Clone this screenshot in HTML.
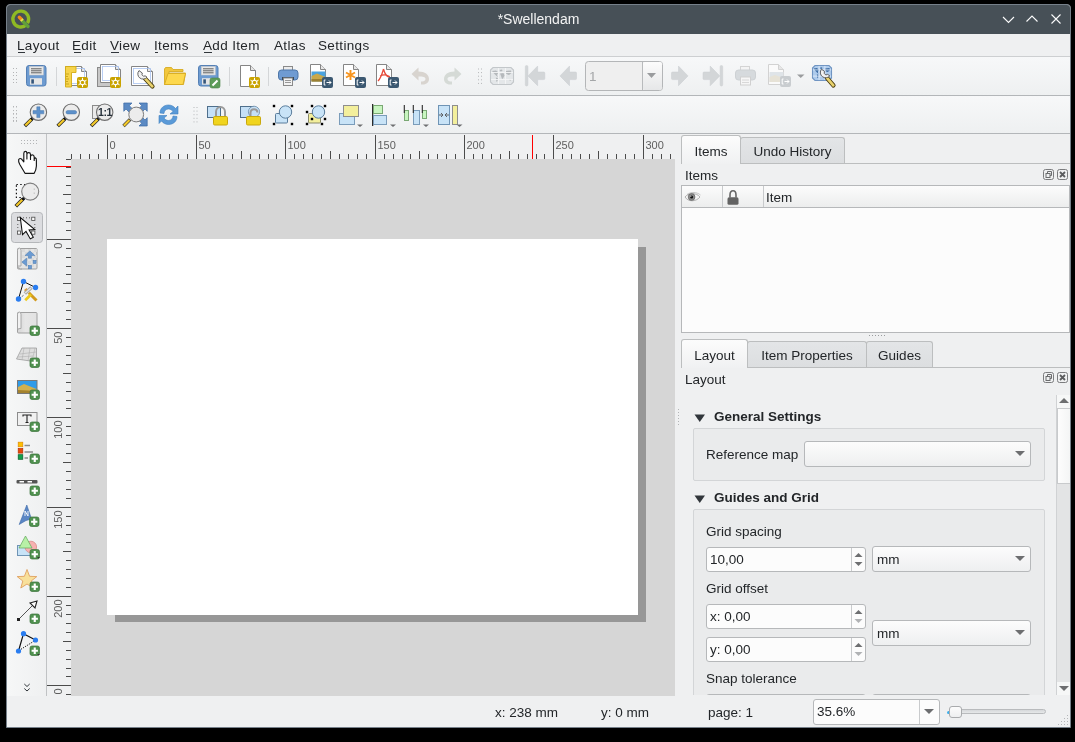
<!DOCTYPE html>
<html><head><meta charset="utf-8"><style>
*{margin:0;padding:0;box-sizing:border-box}
html,body{width:1075px;height:742px;overflow:hidden;background:#000}
body{position:relative;-webkit-font-smoothing:antialiased;font-family:"Liberation Sans",sans-serif;font-size:13.5px;color:#232629}
.a{position:absolute}
.t{position:absolute;white-space:nowrap;line-height:16px}
.ul{position:absolute;height:1px;background:#31363b}
.tb{position:absolute;left:7px;width:1063px;background:linear-gradient(#f7f8f9,#eef0f1);border-bottom:1px solid #b3b6b9}
.dot{position:absolute;width:1px;height:1px;background:#b0b2b4}
svg{position:absolute;overflow:visible}
.tab{position:absolute;border:1px solid #bcbebf;border-bottom:none;border-radius:3px 3px 0 0;text-align:center;line-height:24px;padding-top:2px}
.tab.act{background:linear-gradient(#fcfcfc,#f0f1f2)}
.tab.ina{background:linear-gradient(#e3e5e7,#dcdee0)}
.field{position:absolute;background:#fcfcfc;border:1px solid #b6b8ba;border-radius:3px}
.combo{position:absolute;background:linear-gradient(#fcfcfc,#eeeff0);border:1px solid #b6b8ba;border-radius:3px}
</style></head><body><div style="position:absolute;left:0;top:0;width:1075px;height:742px;will-change:transform">
<div class="a" style="left:6px;top:4px;width:1065px;height:724px;background:#eff0f1;border:1px solid #76808a;border-radius:4px 4px 0 0"></div>
<div class="a" style="left:7px;top:5px;width:1063px;height:29px;background:#475057;border-radius:3px 3px 0 0"></div>
<div class="t" style="left:7px;top:11px;width:1063px;text-align:center;color:#f4f4f4;font-size:14px">*Swellendam</div>
<div class="a" style="left:7px;top:34px;width:1063px;height:23px;background:#eff0f1;border-bottom:1px solid #cdcfd1"></div>
<span class="t" style="left:17px;top:38px;letter-spacing:0.35px">Layout</span>
<span class="t" style="left:72px;top:38px;letter-spacing:0.35px">Edit</span>
<span class="t" style="left:110px;top:38px;letter-spacing:0.35px">View</span>
<span class="t" style="left:154px;top:38px;letter-spacing:0.35px">Items</span>
<span class="t" style="left:203px;top:38px;letter-spacing:0.35px">Add Item</span>
<span class="t" style="left:274px;top:38px;letter-spacing:0.35px">Atlas</span>
<span class="t" style="left:318px;top:38px;letter-spacing:0.35px">Settings</span>
<div class="ul" style="left:18px;top:52px;width:7px"></div>
<div class="ul" style="left:74px;top:52px;width:7px"></div>
<div class="ul" style="left:111px;top:52px;width:8px"></div>
<div class="ul" style="left:155px;top:52px;width:3px"></div>
<div class="ul" style="left:204px;top:52px;width:8px"></div>
<div class="tb" style="top:57px;height:39px"></div>
<div class="tb" style="top:96px;height:38px"></div>
<div class="dot" style="left:13px;top:68.0px;background:#b3b5b7"></div><div class="dot" style="left:13px;top:71.6px;background:#b3b5b7"></div><div class="dot" style="left:13px;top:75.2px;background:#b3b5b7"></div><div class="dot" style="left:13px;top:78.8px;background:#b3b5b7"></div><div class="dot" style="left:13px;top:82.4px;background:#b3b5b7"></div><div class="dot" style="left:16px;top:68.0px;background:#b3b5b7"></div><div class="dot" style="left:16px;top:71.6px;background:#b3b5b7"></div><div class="dot" style="left:16px;top:75.2px;background:#b3b5b7"></div><div class="dot" style="left:16px;top:78.8px;background:#b3b5b7"></div><div class="dot" style="left:16px;top:82.4px;background:#b3b5b7"></div>
<div class="dot" style="left:13px;top:106.0px;background:#b3b5b7"></div><div class="dot" style="left:13px;top:109.6px;background:#b3b5b7"></div><div class="dot" style="left:13px;top:113.2px;background:#b3b5b7"></div><div class="dot" style="left:13px;top:116.8px;background:#b3b5b7"></div><div class="dot" style="left:13px;top:120.4px;background:#b3b5b7"></div><div class="dot" style="left:16px;top:106.0px;background:#b3b5b7"></div><div class="dot" style="left:16px;top:109.6px;background:#b3b5b7"></div><div class="dot" style="left:16px;top:113.2px;background:#b3b5b7"></div><div class="dot" style="left:16px;top:116.8px;background:#b3b5b7"></div><div class="dot" style="left:16px;top:120.4px;background:#b3b5b7"></div>
<div class="a" style="left:7px;top:134px;width:39px;height:562px;background:linear-gradient(90deg,#f6f7f7,#eff0f1)"></div>
<div class="dot" style="left:21px;top:140px;background:#b3b5b7"></div><div class="dot" style="left:21px;top:143px;background:#b3b5b7"></div><div class="dot" style="left:24px;top:140px;background:#b3b5b7"></div><div class="dot" style="left:24px;top:143px;background:#b3b5b7"></div><div class="dot" style="left:27px;top:140px;background:#b3b5b7"></div><div class="dot" style="left:27px;top:143px;background:#b3b5b7"></div><div class="dot" style="left:30px;top:140px;background:#b3b5b7"></div><div class="dot" style="left:30px;top:143px;background:#b3b5b7"></div><div class="dot" style="left:33px;top:140px;background:#b3b5b7"></div><div class="dot" style="left:33px;top:143px;background:#b3b5b7"></div><div class="dot" style="left:36px;top:140px;background:#b3b5b7"></div><div class="dot" style="left:36px;top:143px;background:#b3b5b7"></div>
<div class="a" style="left:46px;top:134px;width:1px;height:562px;background:#c0c2c4"></div>
<div class="a" style="left:47px;top:134px;width:628px;height:25px;background:#eff0f1"></div>
<div class="a" style="left:47px;top:159px;width:24px;height:537px;background:#eff0f1"></div>
<div class="a" style="left:71px;top:159px;width:604px;height:537px;background:#d6d6d6;overflow:hidden"><div class="a" style="left:44px;top:88px;width:531px;height:375px;background:#979797"></div><div class="a" style="left:36px;top:80px;width:531px;height:376px;background:#fff"></div></div>
<svg width="1075" height="742" style="left:0;top:0"><defs><clipPath id="rc"><rect x="47" y="134" width="628" height="561"/></clipPath></defs><g clip-path="url(#rc)"><line x1="71.5" y1="154" x2="71.5" y2="159" stroke="#4b4b4b"/><line x1="80.5" y1="154" x2="80.5" y2="159" stroke="#4b4b4b"/><line x1="89.5" y1="154" x2="89.5" y2="159" stroke="#4b4b4b"/><line x1="98.5" y1="154" x2="98.5" y2="159" stroke="#4b4b4b"/><line x1="107.5" y1="135" x2="107.5" y2="159" stroke="#4b4b4b"/><text x="109.5" y="149" font-size="11" fill="#5e5e5e" font-family="Liberation Sans">0</text><line x1="116.5" y1="154" x2="116.5" y2="159" stroke="#4b4b4b"/><line x1="125.5" y1="154" x2="125.5" y2="159" stroke="#4b4b4b"/><line x1="134.5" y1="154" x2="134.5" y2="159" stroke="#4b4b4b"/><line x1="142.5" y1="154" x2="142.5" y2="159" stroke="#4b4b4b"/><line x1="151.5" y1="151" x2="151.5" y2="159" stroke="#4b4b4b"/><line x1="160.5" y1="154" x2="160.5" y2="159" stroke="#4b4b4b"/><line x1="169.5" y1="154" x2="169.5" y2="159" stroke="#4b4b4b"/><line x1="178.5" y1="154" x2="178.5" y2="159" stroke="#4b4b4b"/><line x1="187.5" y1="154" x2="187.5" y2="159" stroke="#4b4b4b"/><line x1="196.5" y1="135" x2="196.5" y2="159" stroke="#4b4b4b"/><text x="198.5" y="149" font-size="11" fill="#5e5e5e" font-family="Liberation Sans">50</text><line x1="205.5" y1="154" x2="205.5" y2="159" stroke="#4b4b4b"/><line x1="214.5" y1="154" x2="214.5" y2="159" stroke="#4b4b4b"/><line x1="223.5" y1="154" x2="223.5" y2="159" stroke="#4b4b4b"/><line x1="232.5" y1="154" x2="232.5" y2="159" stroke="#4b4b4b"/><line x1="241.5" y1="151" x2="241.5" y2="159" stroke="#4b4b4b"/><line x1="250.5" y1="154" x2="250.5" y2="159" stroke="#4b4b4b"/><line x1="259.5" y1="154" x2="259.5" y2="159" stroke="#4b4b4b"/><line x1="268.5" y1="154" x2="268.5" y2="159" stroke="#4b4b4b"/><line x1="276.5" y1="154" x2="276.5" y2="159" stroke="#4b4b4b"/><line x1="285.5" y1="135" x2="285.5" y2="159" stroke="#4b4b4b"/><text x="287.5" y="149" font-size="11" fill="#5e5e5e" font-family="Liberation Sans">100</text><line x1="294.5" y1="154" x2="294.5" y2="159" stroke="#4b4b4b"/><line x1="303.5" y1="154" x2="303.5" y2="159" stroke="#4b4b4b"/><line x1="312.5" y1="154" x2="312.5" y2="159" stroke="#4b4b4b"/><line x1="321.5" y1="154" x2="321.5" y2="159" stroke="#4b4b4b"/><line x1="330.5" y1="151" x2="330.5" y2="159" stroke="#4b4b4b"/><line x1="339.5" y1="154" x2="339.5" y2="159" stroke="#4b4b4b"/><line x1="348.5" y1="154" x2="348.5" y2="159" stroke="#4b4b4b"/><line x1="357.5" y1="154" x2="357.5" y2="159" stroke="#4b4b4b"/><line x1="366.5" y1="154" x2="366.5" y2="159" stroke="#4b4b4b"/><line x1="375.5" y1="135" x2="375.5" y2="159" stroke="#4b4b4b"/><text x="377.5" y="149" font-size="11" fill="#5e5e5e" font-family="Liberation Sans">150</text><line x1="384.5" y1="154" x2="384.5" y2="159" stroke="#4b4b4b"/><line x1="393.5" y1="154" x2="393.5" y2="159" stroke="#4b4b4b"/><line x1="402.5" y1="154" x2="402.5" y2="159" stroke="#4b4b4b"/><line x1="410.5" y1="154" x2="410.5" y2="159" stroke="#4b4b4b"/><line x1="419.5" y1="151" x2="419.5" y2="159" stroke="#4b4b4b"/><line x1="428.5" y1="154" x2="428.5" y2="159" stroke="#4b4b4b"/><line x1="437.5" y1="154" x2="437.5" y2="159" stroke="#4b4b4b"/><line x1="446.5" y1="154" x2="446.5" y2="159" stroke="#4b4b4b"/><line x1="455.5" y1="154" x2="455.5" y2="159" stroke="#4b4b4b"/><line x1="464.5" y1="135" x2="464.5" y2="159" stroke="#4b4b4b"/><text x="466.5" y="149" font-size="11" fill="#5e5e5e" font-family="Liberation Sans">200</text><line x1="473.5" y1="154" x2="473.5" y2="159" stroke="#4b4b4b"/><line x1="482.5" y1="154" x2="482.5" y2="159" stroke="#4b4b4b"/><line x1="491.5" y1="154" x2="491.5" y2="159" stroke="#4b4b4b"/><line x1="500.5" y1="154" x2="500.5" y2="159" stroke="#4b4b4b"/><line x1="509.5" y1="151" x2="509.5" y2="159" stroke="#4b4b4b"/><line x1="518.5" y1="154" x2="518.5" y2="159" stroke="#4b4b4b"/><line x1="527.5" y1="154" x2="527.5" y2="159" stroke="#4b4b4b"/><line x1="536.5" y1="154" x2="536.5" y2="159" stroke="#4b4b4b"/><line x1="544.5" y1="154" x2="544.5" y2="159" stroke="#4b4b4b"/><line x1="553.5" y1="135" x2="553.5" y2="159" stroke="#4b4b4b"/><text x="555.5" y="149" font-size="11" fill="#5e5e5e" font-family="Liberation Sans">250</text><line x1="562.5" y1="154" x2="562.5" y2="159" stroke="#4b4b4b"/><line x1="571.5" y1="154" x2="571.5" y2="159" stroke="#4b4b4b"/><line x1="580.5" y1="154" x2="580.5" y2="159" stroke="#4b4b4b"/><line x1="589.5" y1="154" x2="589.5" y2="159" stroke="#4b4b4b"/><line x1="598.5" y1="151" x2="598.5" y2="159" stroke="#4b4b4b"/><line x1="607.5" y1="154" x2="607.5" y2="159" stroke="#4b4b4b"/><line x1="616.5" y1="154" x2="616.5" y2="159" stroke="#4b4b4b"/><line x1="625.5" y1="154" x2="625.5" y2="159" stroke="#4b4b4b"/><line x1="634.5" y1="154" x2="634.5" y2="159" stroke="#4b4b4b"/><line x1="643.5" y1="135" x2="643.5" y2="159" stroke="#4b4b4b"/><text x="645.5" y="149" font-size="11" fill="#5e5e5e" font-family="Liberation Sans">300</text><line x1="652.5" y1="154" x2="652.5" y2="159" stroke="#4b4b4b"/><line x1="661.5" y1="154" x2="661.5" y2="159" stroke="#4b4b4b"/><line x1="670.5" y1="154" x2="670.5" y2="159" stroke="#4b4b4b"/><line x1="66" y1="159.5" x2="71" y2="159.5" stroke="#4b4b4b"/><line x1="66" y1="167.5" x2="71" y2="167.5" stroke="#4b4b4b"/><line x1="66" y1="176.5" x2="71" y2="176.5" stroke="#4b4b4b"/><line x1="66" y1="185.5" x2="71" y2="185.5" stroke="#4b4b4b"/><line x1="63" y1="194.5" x2="71" y2="194.5" stroke="#4b4b4b"/><line x1="66" y1="203.5" x2="71" y2="203.5" stroke="#4b4b4b"/><line x1="66" y1="212.5" x2="71" y2="212.5" stroke="#4b4b4b"/><line x1="66" y1="221.5" x2="71" y2="221.5" stroke="#4b4b4b"/><line x1="66" y1="230.5" x2="71" y2="230.5" stroke="#4b4b4b"/><line x1="47" y1="239.5" x2="71" y2="239.5" stroke="#4b4b4b"/><text transform="translate(61.5,242.5) rotate(-90)" text-anchor="end" font-size="11" fill="#5e5e5e" font-family="Liberation Sans">0</text><line x1="66" y1="248.5" x2="71" y2="248.5" stroke="#4b4b4b"/><line x1="66" y1="257.5" x2="71" y2="257.5" stroke="#4b4b4b"/><line x1="66" y1="266.5" x2="71" y2="266.5" stroke="#4b4b4b"/><line x1="66" y1="274.5" x2="71" y2="274.5" stroke="#4b4b4b"/><line x1="63" y1="283.5" x2="71" y2="283.5" stroke="#4b4b4b"/><line x1="66" y1="292.5" x2="71" y2="292.5" stroke="#4b4b4b"/><line x1="66" y1="301.5" x2="71" y2="301.5" stroke="#4b4b4b"/><line x1="66" y1="310.5" x2="71" y2="310.5" stroke="#4b4b4b"/><line x1="66" y1="319.5" x2="71" y2="319.5" stroke="#4b4b4b"/><line x1="47" y1="328.5" x2="71" y2="328.5" stroke="#4b4b4b"/><text transform="translate(61.5,331.5) rotate(-90)" text-anchor="end" font-size="11" fill="#5e5e5e" font-family="Liberation Sans">50</text><line x1="66" y1="337.5" x2="71" y2="337.5" stroke="#4b4b4b"/><line x1="66" y1="346.5" x2="71" y2="346.5" stroke="#4b4b4b"/><line x1="66" y1="355.5" x2="71" y2="355.5" stroke="#4b4b4b"/><line x1="66" y1="364.5" x2="71" y2="364.5" stroke="#4b4b4b"/><line x1="63" y1="373.5" x2="71" y2="373.5" stroke="#4b4b4b"/><line x1="66" y1="382.5" x2="71" y2="382.5" stroke="#4b4b4b"/><line x1="66" y1="391.5" x2="71" y2="391.5" stroke="#4b4b4b"/><line x1="66" y1="400.5" x2="71" y2="400.5" stroke="#4b4b4b"/><line x1="66" y1="408.5" x2="71" y2="408.5" stroke="#4b4b4b"/><line x1="47" y1="417.5" x2="71" y2="417.5" stroke="#4b4b4b"/><text transform="translate(61.5,420.5) rotate(-90)" text-anchor="end" font-size="11" fill="#5e5e5e" font-family="Liberation Sans">100</text><line x1="66" y1="426.5" x2="71" y2="426.5" stroke="#4b4b4b"/><line x1="66" y1="435.5" x2="71" y2="435.5" stroke="#4b4b4b"/><line x1="66" y1="444.5" x2="71" y2="444.5" stroke="#4b4b4b"/><line x1="66" y1="453.5" x2="71" y2="453.5" stroke="#4b4b4b"/><line x1="63" y1="462.5" x2="71" y2="462.5" stroke="#4b4b4b"/><line x1="66" y1="471.5" x2="71" y2="471.5" stroke="#4b4b4b"/><line x1="66" y1="480.5" x2="71" y2="480.5" stroke="#4b4b4b"/><line x1="66" y1="489.5" x2="71" y2="489.5" stroke="#4b4b4b"/><line x1="66" y1="498.5" x2="71" y2="498.5" stroke="#4b4b4b"/><line x1="47" y1="507.5" x2="71" y2="507.5" stroke="#4b4b4b"/><text transform="translate(61.5,510.5) rotate(-90)" text-anchor="end" font-size="11" fill="#5e5e5e" font-family="Liberation Sans">150</text><line x1="66" y1="516.5" x2="71" y2="516.5" stroke="#4b4b4b"/><line x1="66" y1="525.5" x2="71" y2="525.5" stroke="#4b4b4b"/><line x1="66" y1="534.5" x2="71" y2="534.5" stroke="#4b4b4b"/><line x1="66" y1="542.5" x2="71" y2="542.5" stroke="#4b4b4b"/><line x1="63" y1="551.5" x2="71" y2="551.5" stroke="#4b4b4b"/><line x1="66" y1="560.5" x2="71" y2="560.5" stroke="#4b4b4b"/><line x1="66" y1="569.5" x2="71" y2="569.5" stroke="#4b4b4b"/><line x1="66" y1="578.5" x2="71" y2="578.5" stroke="#4b4b4b"/><line x1="66" y1="587.5" x2="71" y2="587.5" stroke="#4b4b4b"/><line x1="47" y1="596.5" x2="71" y2="596.5" stroke="#4b4b4b"/><text transform="translate(61.5,599.5) rotate(-90)" text-anchor="end" font-size="11" fill="#5e5e5e" font-family="Liberation Sans">200</text><line x1="66" y1="605.5" x2="71" y2="605.5" stroke="#4b4b4b"/><line x1="66" y1="614.5" x2="71" y2="614.5" stroke="#4b4b4b"/><line x1="66" y1="623.5" x2="71" y2="623.5" stroke="#4b4b4b"/><line x1="66" y1="632.5" x2="71" y2="632.5" stroke="#4b4b4b"/><line x1="63" y1="641.5" x2="71" y2="641.5" stroke="#4b4b4b"/><line x1="66" y1="650.5" x2="71" y2="650.5" stroke="#4b4b4b"/><line x1="66" y1="659.5" x2="71" y2="659.5" stroke="#4b4b4b"/><line x1="66" y1="668.5" x2="71" y2="668.5" stroke="#4b4b4b"/><line x1="66" y1="676.5" x2="71" y2="676.5" stroke="#4b4b4b"/><line x1="47" y1="685.5" x2="71" y2="685.5" stroke="#4b4b4b"/><text transform="translate(61.5,688.5) rotate(-90)" text-anchor="end" font-size="11" fill="#5e5e5e" font-family="Liberation Sans">250</text><line x1="66" y1="694.5" x2="71" y2="694.5" stroke="#4b4b4b"/><line x1="532.5" y1="135" x2="532.5" y2="159" stroke="#ff0000"/><line x1="47" y1="166.5" x2="71" y2="166.5" stroke="#ff0000"/></g></svg>
<div class="a" style="left:675px;top:134px;width:395px;height:562px;background:#eff0f1"></div>
<div class="dot" style="left:678px;top:409px;background:#b3b5b7"></div><div class="dot" style="left:678px;top:412px;background:#b3b5b7"></div><div class="dot" style="left:678px;top:415px;background:#b3b5b7"></div><div class="dot" style="left:678px;top:418px;background:#b3b5b7"></div><div class="dot" style="left:678px;top:421px;background:#b3b5b7"></div><div class="dot" style="left:678px;top:424px;background:#b3b5b7"></div>
<div class="a" style="left:681px;top:163px;width:389px;height:1px;background:#bcbebf"></div>
<div class="tab ina" style="left:740px;top:137px;width:105px;height:26px">Undo History</div>
<div class="tab act" style="left:681px;top:135px;width:60px;height:29px;line-height:28px;border-bottom:none">Items</div>
<span class="t" style="left:685px;top:168px">Items</span>
<svg width="30" height="12" style="left:1043px;top:169px"><rect x="0.5" y="0.5" width="10" height="10" rx="2" fill="none" stroke="#7b7c7e"/><rect x="3" y="4.5" width="4" height="4" fill="none" stroke="#6b6c6e"/><path d="M4.5 4.5V2.5h4v4h-1.5" fill="none" stroke="#6b6c6e"/><rect x="14.5" y="0.5" width="10" height="10" rx="2" fill="none" stroke="#7b7c7e"/><path d="M17 3L22 8M22 3L17 8" stroke="#5b5c5e" stroke-width="1.8"/></svg>
<div class="a" style="left:681px;top:185px;width:389px;height:148px;background:#fcfcfc;border:1px solid #b6b8ba"></div>
<div class="a" style="left:682px;top:186px;width:387px;height:22px;background:linear-gradient(#fcfcfc,#eceded);border-bottom:1px solid #b6b8ba"></div>
<div class="a" style="left:722px;top:186px;width:1px;height:21px;background:#c8cacc"></div>
<div class="a" style="left:763px;top:186px;width:1px;height:21px;background:#c8cacc"></div>
<span class="t" style="left:766px;top:190px">Item</span>
<svg width="20" height="14" style="left:684px;top:191px"><path d="M1 6C4 2 12 1 16 6C12 11 4 11 1 6Z" fill="#f4f4f4" stroke="#a0a0a0" stroke-width="0.8"/><path d="M3 3.5C7 0.5 13 1 16.5 4" fill="none" stroke="#b0b0b0" stroke-width="0.7"/><circle cx="7.6" cy="6" r="3.4" fill="#8a8a8a" stroke="#5a5a5a" stroke-width="0.6"/><circle cx="7.6" cy="6" r="1.5" fill="#111"/><circle cx="6.9" cy="5.2" r="0.5" fill="#fff"/></svg>
<svg width="14" height="16" style="left:727px;top:190px"><path d="M3 7.5V5C3 2.2 4.3 0.8 6 0.8C7.7 0.8 9 2.2 9 5V7.5" fill="none" stroke="#666" stroke-width="1.6"/><rect x="0.5" y="7.3" width="11" height="7.5" rx="1.6" fill="#636363"/></svg>
<div class="dot" style="left:869px;top:335px;background:#9a9c9e"></div><div class="dot" style="left:872px;top:335px;background:#9a9c9e"></div><div class="dot" style="left:875px;top:335px;background:#9a9c9e"></div><div class="dot" style="left:878px;top:335px;background:#9a9c9e"></div><div class="dot" style="left:881px;top:335px;background:#9a9c9e"></div><div class="dot" style="left:884px;top:335px;background:#9a9c9e"></div>
<div class="a" style="left:681px;top:367px;width:389px;height:1px;background:#bcbebf"></div>
<div class="tab ina" style="left:747px;top:341px;width:120px;height:26px">Item Properties</div>
<div class="tab ina" style="left:866px;top:341px;width:67px;height:26px">Guides</div>
<div class="tab act" style="left:681px;top:339px;width:67px;height:29px;line-height:28px">Layout</div>
<span class="t" style="left:685px;top:372px">Layout</span>
<svg width="30" height="12" style="left:1043px;top:372px"><rect x="0.5" y="0.5" width="10" height="10" rx="2" fill="none" stroke="#7b7c7e"/><rect x="3" y="4.5" width="4" height="4" fill="none" stroke="#6b6c6e"/><path d="M4.5 4.5V2.5h4v4h-1.5" fill="none" stroke="#6b6c6e"/><rect x="14.5" y="0.5" width="10" height="10" rx="2" fill="none" stroke="#7b7c7e"/><path d="M17 3L22 8M22 3L17 8" stroke="#5b5c5e" stroke-width="1.8"/></svg>
<svg width="12" height="9" style="left:694px;top:414px"><path d="M0.5 0.5H11L5.75 8Z" fill="#31363b"/></svg>
<span class="t" style="left:714px;top:409px;font-weight:bold">General Settings</span>
<div class="a" style="left:693px;top:428px;width:352px;height:53px;background:#eaebec;border:1px solid #d3d5d7;border-radius:2px"></div>
<span class="t" style="left:706px;top:447px">Reference map</span>
<div class="combo" style="left:804px;top:441px;width:227px;height:26px"></div>
<svg width="10" height="6" style="left:1015px;top:451px"><path d="M0 0H10L5 5Z" fill="#6d6e70"/></svg>
<svg width="12" height="9" style="left:694px;top:495px"><path d="M0.5 0.5H11L5.75 8Z" fill="#31363b"/></svg>
<span class="t" style="left:714px;top:490px;font-weight:bold">Guides and Grid</span>
<div class="a" style="left:693px;top:509px;width:352px;height:200px;background:#eaebec;border:1px solid #d3d5d7;border-radius:2px"></div>
<span class="t" style="left:706px;top:524px">Grid spacing</span>
<div class="field" style="left:706px;top:547px;width:160px;height:25px"></div><div class="a" style="left:851px;top:548px;width:1px;height:23px;background:#c9cbcd"></div><span class="t" style="left:710px;top:552px">10,00</span><svg width="10" height="20" style="left:854px;top:552px"><path d="M0.5 5L4.5 1L8.5 5Z" fill="#6d6e70"/><path d="M0.5 10L4.5 14L8.5 10Z" fill="#6d6e70"/></svg>
<div class="combo" style="left:872px;top:546px;width:159px;height:26px"></div>
<span class="t" style="left:877px;top:552px">mm</span>
<svg width="10" height="6" style="left:1015px;top:556px"><path d="M0 0H10L5 5Z" fill="#6d6e70"/></svg>
<span class="t" style="left:706px;top:581px">Grid offset</span>
<div class="field" style="left:706px;top:604px;width:160px;height:25px"></div><div class="a" style="left:851px;top:605px;width:1px;height:23px;background:#c9cbcd"></div><span class="t" style="left:710px;top:609px">x: 0,00</span><svg width="10" height="20" style="left:854px;top:609px"><path d="M0.5 5L4.5 1L8.5 5Z" fill="#6d6e70"/><path d="M0.5 10L4.5 14L8.5 10Z" fill="#b0b2b4"/></svg>
<div class="field" style="left:706px;top:637px;width:160px;height:25px"></div><div class="a" style="left:851px;top:638px;width:1px;height:23px;background:#c9cbcd"></div><span class="t" style="left:710px;top:642px">y: 0,00</span><svg width="10" height="20" style="left:854px;top:642px"><path d="M0.5 5L4.5 1L8.5 5Z" fill="#6d6e70"/><path d="M0.5 10L4.5 14L8.5 10Z" fill="#b0b2b4"/></svg>
<div class="combo" style="left:872px;top:620px;width:159px;height:26px"></div>
<span class="t" style="left:877px;top:626px">mm</span>
<svg width="10" height="6" style="left:1015px;top:630px"><path d="M0 0H10L5 5Z" fill="#6d6e70"/></svg>
<span class="t" style="left:706px;top:671px">Snap tolerance</span>
<div class="field" style="left:706px;top:694px;width:160px;height:25px"></div>
<div class="combo" style="left:872px;top:694px;width:159px;height:26px"></div>
<div class="a" style="left:675px;top:695px;width:395px;height:32px;background:#eff0f1"></div>
<div class="a" style="left:1056px;top:395px;width:14px;height:300px;background:#e3e4e5;border-left:1px solid #d0d2d4"></div>
<div class="a" style="left:1057px;top:408px;width:13px;height:76px;background:linear-gradient(90deg,#fdfdfd,#f4f5f5);border:1px solid #c8cacc;border-right:none"></div>
<div class="a" style="left:1057px;top:395px;width:13px;height:13px;background:#f6f7f7"></div>
<div class="a" style="left:1057px;top:682px;width:13px;height:13px;background:#f6f7f7"></div>
<svg width="10" height="6" style="left:1059px;top:398px"><path d="M0 5H10L5 0Z" fill="#6d6e70"/></svg>
<svg width="10" height="6" style="left:1059px;top:686px"><path d="M0 0H10L5 5Z" fill="#6d6e70"/></svg>
<span class="t" style="left:495px;top:705px">x: 238 mm</span>
<span class="t" style="left:601px;top:705px">y: 0 mm</span>
<span class="t" style="left:708px;top:705px">page: 1</span>
<div class="field" style="left:813px;top:699px;width:127px;height:26px"></div>
<div class="a" style="left:919px;top:700px;width:1px;height:24px;background:#c9cbcd"></div>
<span class="t" style="left:817px;top:704px">35.6%</span>
<svg width="10" height="6" style="left:924px;top:709px"><path d="M0 0H10L5 5Z" fill="#6d6e70"/></svg>
<div class="a" style="left:950px;top:709px;width:96px;height:5px;background:linear-gradient(#d6d8da,#e6e8e9);border:1px solid #b9bbbd;border-radius:3px"></div>
<div class="a" style="left:947px;top:711px;width:4px;height:3px;background:#3daee9;border-radius:2px"></div>
<div class="a" style="left:949px;top:706px;width:13px;height:12px;background:linear-gradient(#fcfcfc,#eeeff0);border:1px solid #a9abad;border-radius:3px"></div>
<div class="dot" style="left:1067px;top:715px;background:#b4b6b8"></div>
<div class="dot" style="left:1067px;top:718px;background:#b4b6b8"></div>
<div class="dot" style="left:1064px;top:718px;background:#b4b6b8"></div>
<div class="dot" style="left:1067px;top:721px;background:#b4b6b8"></div>
<div class="dot" style="left:1064px;top:721px;background:#b4b6b8"></div>
<div class="dot" style="left:1061px;top:721px;background:#b4b6b8"></div>
<div class="dot" style="left:1067px;top:724px;background:#b4b6b8"></div>
<div class="dot" style="left:1064px;top:724px;background:#b4b6b8"></div>
<div class="dot" style="left:1061px;top:724px;background:#b4b6b8"></div>
<div class="dot" style="left:1058px;top:724px;background:#b4b6b8"></div>
<svg width="1075" height="742" style="left:0;top:0;position:absolute"><defs><linearGradient id="sg" x1="0" y1="0" x2="1" y2="0"><stop offset="0" stop-color="#d6d6d6"/><stop offset="0.4" stop-color="#e6e6e6"/><stop offset="1" stop-color="#e2e2e2"/></linearGradient><linearGradient id="cg" x1="0" y1="0" x2="0" y2="1"><stop offset="0" stop-color="#fcfcfc"/><stop offset="1" stop-color="#e6e7e8"/></linearGradient></defs><g transform="translate(26,65)"><rect x="0.5" y="0.5" width="19.5" height="20.5" rx="2.5" fill="#6d9bd1" stroke="#5580b5"/><rect x="3.3" y="1.5" width="14" height="8.5" fill="#e8e8e8" stroke="#c9c9c9" stroke-width="0.5"/><path d="M5 3.8H15.6M5 5.8H15.6M5 7.8H15.6" stroke="#505050" stroke-width="0.9"/><rect x="4" y="13.2" width="12" height="6.5" fill="#e6e6e6"/><rect x="5.3" y="14.3" width="2.6" height="4.3" fill="#34557a"/></g><rect x="56" y="67" width="1" height="19" fill="#d4d6d8"/><g transform="translate(65,66)"><path d="M0.5 0.5H16.5L21.5 5.5V19.5H0.5Z" fill="#fff" stroke="#858585"/><path d="M16.5 0.5V5.5H21.5" fill="#e6e6e6" stroke="#858585"/></g><g transform="translate(65,66)"><rect x="2.5" y="2.5" width="17" height="15" fill="none" stroke="#a9c3f0" stroke-width="0.8"/><path d="M0.5 0.5H11V6.5H6.5V21H0.5Z" fill="#f6d34b" stroke="#d4ad14" stroke-width="0.9"/><path d="M1 8H4M1 10.5H3M1 13H4M1 15.5H3M1 18H4" stroke="#b9950c" stroke-width="0.7"/></g><g transform="translate(77,77)"><rect x="0" y="0" width="11" height="11" rx="2" fill="#c9a300"/><path d="M5.50 3.30L5.50 1.20M5.50 7.70L5.50 9.80M7.41 4.40L9.22 3.35M3.59 4.40L1.78 3.35M3.59 6.60L1.78 7.65M7.41 6.60L9.22 7.65" stroke="#fff" stroke-width="1.0" stroke-linecap="round"/><path d="M5.5 2.9L7.75 4.2V6.8L5.5 8.1L3.25 6.8V4.2Z" fill="none" stroke="#fff" stroke-width="1.1"/></g><g transform="translate(97,64)"><rect x="0.5" y="3.5" width="18" height="19" fill="#c8c8c8" stroke="#8a8a8a"/></g><g transform="translate(100,64)"><path d="M0.5 0.5H15.5L20.5 5.5V18.5H0.5Z" fill="#fff" stroke="#858585"/><path d="M15.5 0.5V5.5H20.5" fill="#e6e6e6" stroke="#858585"/></g><g transform="translate(100,64)"><rect x="2.5" y="2.5" width="16" height="14" fill="none" stroke="#a9c3f0" stroke-width="0.8"/></g><g transform="translate(110,77)"><rect x="0" y="0" width="11" height="11" rx="2" fill="#c9a300"/><path d="M5.50 3.30L5.50 1.20M5.50 7.70L5.50 9.80M7.41 4.40L9.22 3.35M3.59 4.40L1.78 3.35M3.59 6.60L1.78 7.65M7.41 6.60L9.22 7.65" stroke="#fff" stroke-width="1.0" stroke-linecap="round"/><path d="M5.5 2.9L7.75 4.2V6.8L5.5 8.1L3.25 6.8V4.2Z" fill="none" stroke="#fff" stroke-width="1.1"/></g><g transform="translate(131,66)"><path d="M0.5 0.5H16.5L21.5 5.5V19.5H0.5Z" fill="#fff" stroke="#858585"/><path d="M16.5 0.5V5.5H21.5" fill="#e6e6e6" stroke="#858585"/></g><g transform="translate(131,66)"><rect x="2.5" y="2.5" width="17" height="15" fill="none" stroke="#a9c3f0" stroke-width="0.8"/><path d="M14 12.5L21.5 20.5" stroke="#4a3d10" stroke-width="4.2" stroke-linecap="round"/><path d="M14.2 12.7L21.3 20.3" stroke="#e9d26c" stroke-width="2.7" stroke-linecap="round"/><path d="M8 4.6A4.6 4.6 0 1 0 16 11.2L14.1 9.8L12.5 10.3L11 8.8L11.3 7Z" fill="#f2f2f2" stroke="#555" stroke-width="0.9"/></g><g transform="translate(164,67)"><path d="M0.5 2V17.5H19.5L21.5 6H5V4.5H19V2.5H9L7.5 0.5H1.5Z" fill="#f2c73d" stroke="#d7ac23" stroke-width="0.9"/><path d="M0.5 17.5L4 6.5H21.5L19 17.5Z" fill="#fdd84d" stroke="#d7ac23" stroke-width="0.9"/></g><g transform="translate(198,65)"><rect x="0.5" y="0.5" width="19.5" height="20.5" rx="2.5" fill="#6d9bd1" stroke="#5580b5"/><rect x="3.3" y="1.5" width="14" height="8.5" fill="#e8e8e8" stroke="#c9c9c9" stroke-width="0.5"/><path d="M5 3.8H15.6M5 5.8H15.6M5 7.8H15.6" stroke="#505050" stroke-width="0.9"/><rect x="4" y="13.2" width="12" height="6.5" fill="#e6e6e6"/><rect x="5.3" y="14.3" width="2.6" height="4.3" fill="#34557a"/></g><g transform="translate(210,78)"><rect x="0" y="0" width="10" height="10" rx="2" fill="#5d9c5a" stroke="#4a8547" stroke-width="0.6"/><path d="M2.5 7.5L7.5 2.5" stroke="#fff" stroke-width="2"/></g><rect x="229" y="67" width="1" height="19" fill="#d4d6d8"/><g transform="translate(240,65)"><path d="M0.5 0.5H10.5L15.5 5.5V21.5H0.5Z" fill="#fff" stroke="#858585"/><path d="M10.5 0.5V5.5H15.5" fill="#e6e6e6" stroke="#858585"/></g><g transform="translate(249,77)"><rect x="0" y="0" width="11" height="11" rx="2" fill="#c9a300"/><path d="M5.50 3.30L5.50 1.20M5.50 7.70L5.50 9.80M7.41 4.40L9.22 3.35M3.59 4.40L1.78 3.35M3.59 6.60L1.78 7.65M7.41 6.60L9.22 7.65" stroke="#fff" stroke-width="1.0" stroke-linecap="round"/><path d="M5.5 2.9L7.75 4.2V6.8L5.5 8.1L3.25 6.8V4.2Z" fill="none" stroke="#fff" stroke-width="1.1"/></g><rect x="268" y="67" width="1" height="19" fill="#d4d6d8"/><g transform="translate(278,66)"><rect x="5.5" y="0.5" width="9" height="6" fill="#ececec" stroke="#8a8a8a"/><rect x="0.5" y="4" width="19.5" height="10" rx="3" fill="#6f9bd2" stroke="#4f77a8"/><rect x="4" y="11" width="12" height="3" fill="#3a4a5a"/><rect x="5.5" y="12" width="9" height="7.5" fill="#f2f2f2" stroke="#8a8a8a"/><path d="M7 14.5H13M7 16.5H13" stroke="#808080" stroke-width="0.8"/></g><g transform="translate(310,64)"><path d="M0.5 0.5H10.5L15.5 5.5V21.5H0.5Z" fill="#fff" stroke="#858585"/><path d="M10.5 0.5V5.5H15.5" fill="#e6e6e6" stroke="#858585"/></g><g transform="translate(310,64)"><rect x="1.5" y="7.5" width="14" height="10" fill="#4aa3df"/><path d="M1.5 17.5V12L7 9.5L15.5 13V17.5Z" fill="#c9a84a"/><path d="M1.5 15V17.5H15.5V15Z" fill="#9c8032"/></g><g transform="translate(322,77)"><rect x="0" y="0" width="11" height="11" rx="2" fill="#3b5871"/><path d="M3.5 3H2.2V8H3.5M4.5 5.5H9M7 3.5L9 5.5L7 7.5" stroke="#fff" stroke-width="1" fill="none"/></g><g transform="translate(343,64)"><path d="M0.5 0.5H10.5L15.5 5.5V21.5H0.5Z" fill="#fff" stroke="#858585"/><path d="M10.5 0.5V5.5H15.5" fill="#e6e6e6" stroke="#858585"/></g><g transform="translate(343,64)"><path d="M7.5 6V16M3 8.5L12 13.5M12 8.5L3 13.5" stroke="#f7941d" stroke-width="1.9"/></g><g transform="translate(355,77)"><rect x="0" y="0" width="11" height="11" rx="2" fill="#3b5871"/><path d="M3.5 3H2.2V8H3.5M4.5 5.5H9M7 3.5L9 5.5L7 7.5" stroke="#fff" stroke-width="1" fill="none"/></g><g transform="translate(376,64)"><path d="M0.5 0.5H10.5L15.5 5.5V21.5H0.5Z" fill="#fff" stroke="#858585"/><path d="M10.5 0.5V5.5H15.5" fill="#e6e6e6" stroke="#858585"/></g><g transform="translate(376,64)"><path d="M7.5 5C6 10 5 14 2 17M7.5 5C9 11 11 13 14 13M4 12C8 10 11 11 13.5 12.5" stroke="#e64a3a" stroke-width="1.3" fill="none"/></g><g transform="translate(388,77)"><rect x="0" y="0" width="11" height="11" rx="2" fill="#3b5871"/><path d="M3.5 3H2.2V8H3.5M4.5 5.5H9M7 3.5L9 5.5L7 7.5" stroke="#fff" stroke-width="1" fill="none"/></g><g transform="translate(411,67)"><path d="M0.5 7L7.5 0.5V4.5C14 4.5 18 7.5 18 12C18 16 14.5 17.5 12 17.5H10V14.5H11.5C13 14.5 14.5 13.5 14.5 12C14.5 10 12 9.5 7.5 9.5V13.5Z" fill="#d8d4cf"/></g><g transform="translate(444,67)"><path d="M17.5 7L10.5 0.5V4.5C4 4.5 0 7.5 0 12C0 16 3.5 17.5 6 17.5H8V14.5H6.5C5 14.5 3.5 13.5 3.5 12C3.5 10 6 9.5 10.5 9.5V13.5Z" fill="#d5dad6"/></g><rect x="478" y="68.5" width="1" height="1" fill="#b5b7b9"/><rect x="478" y="72.1" width="1" height="1" fill="#b5b7b9"/><rect x="478" y="75.7" width="1" height="1" fill="#b5b7b9"/><rect x="478" y="79.3" width="1" height="1" fill="#b5b7b9"/><rect x="478" y="82.9" width="1" height="1" fill="#b5b7b9"/><rect x="481" y="68.5" width="1" height="1" fill="#b5b7b9"/><rect x="481" y="72.1" width="1" height="1" fill="#b5b7b9"/><rect x="481" y="75.7" width="1" height="1" fill="#b5b7b9"/><rect x="481" y="79.3" width="1" height="1" fill="#b5b7b9"/><rect x="481" y="82.9" width="1" height="1" fill="#b5b7b9"/><g transform="translate(490,67)"><path d="M3 0.5H21L23.5 3V15L21 17.5H3L0.5 15V3Z" fill="#e4e7e9" stroke="#c3c7ca" stroke-width="1.1"/><g transform="scale(1.0,1.0)"><path d="M2 4L6 3.5L8.5 5.5L7 8L8 10L6.5 9L4 6.5Z M9.5 3L12 2.5L12.5 4L10.5 4.5Z M10 6.5L13.5 6L14.5 8.5L13 11.5L12 12L11 9Z M5.8 10.5L8 11L7.5 14L6.5 15Z M15.5 4L21 3.5L21.5 6L19 8L17.5 7.5L16 6.5Z M19 12L21.5 12.5L20 14Z" fill="#b5b9bc"/><path d="M8.5 1V17M15.5 1V17M1 5.5H23M1 12.5H23" stroke="#f4f5f6" stroke-width="0.9"/></g></g><g transform="translate(525,65.3)"><rect x="0.3" y="0.2" width="2.6" height="20.5" rx="1.2" fill="#d3d6d8" stroke="#cbced1" stroke-width="0.5"/><path d="M3 10.6L12.6 0.8V6.7H18.8Q19.8 6.7 19.8 7.7V13.3Q19.8 14.3 18.8 14.3H12.6V20.4Z" fill="#d3d6d8" stroke="#c9ccd0" stroke-width="0.5"/></g><g transform="translate(560,65.3)"><path d="M0 10.6L9.5 0.8V6.7H15.5Q16.5 6.7 16.5 7.7V13.3Q16.5 14.3 15.5 14.3H9.5V20.4Z" fill="#d3d6d8" stroke="#c9ccd0" stroke-width="0.5"/></g><rect x="585.5" y="61.5" width="77" height="29" rx="3" fill="#efefef" stroke="#b4b6b8"/><path d="M642.5 62V90" stroke="#b8babc"/><rect x="643" y="62" width="19" height="28" rx="2" fill="url(#cg)"/><path d="M647 73H656L651.5 78Z" fill="#9a9c9e"/><text x="589" y="81" font-size="13.5" fill="#a4a6a8" font-family="Liberation Sans">1</text><g transform="translate(671,65.3)"><path d="M17 10.6L7.5 0.8V6.7H1.5Q0.5 6.7 0.5 7.7V13.3Q0.5 14.3 1.5 14.3H7.5V20.4Z" fill="#d3d6d8" stroke="#c9ccd0" stroke-width="0.5"/></g><g transform="translate(703,65.3)"><rect x="17.1" y="0.2" width="2.6" height="20.5" rx="1.2" fill="#d3d6d8" stroke="#cbced1" stroke-width="0.5"/><path d="M16.8 10.6L7.2 0.8V6.7H1Q0 6.7 0 7.7V13.3Q0 14.3 1 14.3H7.2V20.4Z" fill="#d3d6d8" stroke="#c9ccd0" stroke-width="0.5"/></g><g transform="translate(735,66)"><rect x="5.5" y="0.5" width="9" height="6" fill="#f4f4f4" stroke="#d4d4d4"/><rect x="0.5" y="4" width="20" height="10" rx="3" fill="#d6dadd" stroke="#cdd1d4"/><rect x="5.5" y="11" width="10" height="8" fill="#f6f6f6" stroke="#d0d0d0"/><path d="M7 14H14M7 16.5H14" stroke="#d0d0d0" stroke-width="0.8"/></g><g transform="translate(768,64)"><path d="M0.5 0.5H10.5L15.5 5.5V20.5H0.5Z" fill="#fafafa" stroke="#d2d2d2"/><path d="M10.5 0.5V5.5H15.5" fill="#e6e6e6" stroke="#d2d2d2"/></g><g transform="translate(768,64)"><rect x="1.5" y="8" width="14" height="10" fill="#dfe4e8"/><path d="M1.5 18V13L7 11L15.5 14V18Z" fill="#e6e2d6"/></g><g transform="translate(780,76)"><rect x="0" y="0" width="11" height="11" rx="2" fill="#c9cdd0"/><path d="M3.5 3H2.2V8H3.5M4.5 5.5H9M7 3.5L9 5.5L7 7.5" stroke="#fff" stroke-width="1" fill="none"/></g><path d="M797 74.5H804.5L800.75 78Z" fill="#9a9c9e"/><g transform="translate(812,65)"><path d="M3 0.5H17L19.5 3V13L17 15.5H3L0.5 13V3Z" fill="#aecbec" stroke="#6f94c2" stroke-width="1.1"/><g transform="scale(0.8333333333333334,0.8888888888888888)"><path d="M2 4L6 3.5L8.5 5.5L7 8L8 10L6.5 9L4 6.5Z M9.5 3L12 2.5L12.5 4L10.5 4.5Z M10 6.5L13.5 6L14.5 8.5L13 11.5L12 12L11 9Z M5.8 10.5L8 11L7.5 14L6.5 15Z M15.5 4L21 3.5L21.5 6L19 8L17.5 7.5L16 6.5Z M19 12L21.5 12.5L20 14Z" fill="#3f6ea5"/><path d="M8.5 1V17M15.5 1V17M1 5.5H23M1 12.5H23" stroke="#e6f0fb" stroke-width="0.9"/></g></g><g transform="translate(812,65)"><path d="M15 13L21.5 20.5" stroke="#4a3d10" stroke-width="4.2" stroke-linecap="round"/><path d="M15.2 13.2L21.3 20.3" stroke="#e9d26c" stroke-width="2.7" stroke-linecap="round"/><path d="M9.5 4.2A5 5 0 1 0 17.8 10.8L15.6 9.4L13.8 10L12.2 8.3L12.5 6.4Z" fill="#f2f2f2" stroke="#555" stroke-width="0.9"/></g><rect x="13" y="106.5" width="1" height="1" fill="#b5b7b9"/><rect x="13" y="110.1" width="1" height="1" fill="#b5b7b9"/><rect x="13" y="113.7" width="1" height="1" fill="#b5b7b9"/><rect x="13" y="117.3" width="1" height="1" fill="#b5b7b9"/><rect x="13" y="120.9" width="1" height="1" fill="#b5b7b9"/><rect x="16" y="106.5" width="1" height="1" fill="#b5b7b9"/><rect x="16" y="110.1" width="1" height="1" fill="#b5b7b9"/><rect x="16" y="113.7" width="1" height="1" fill="#b5b7b9"/><rect x="16" y="117.3" width="1" height="1" fill="#b5b7b9"/><rect x="16" y="120.9" width="1" height="1" fill="#b5b7b9"/><path d="M24.799999999999997 126.0L31.9 118.9" stroke="#1f1f1f" stroke-width="3.6"/><path d="M25.299999999999997 125.5L31.2 119.60000000000001" stroke="#f3c92a" stroke-width="2.2"/><circle cx="32.5" cy="118.3" r="1.7" fill="#111"/><circle cx="38.4" cy="112.2" r="8.2" fill="#ececec" stroke="#6f6f6f" stroke-width="1.1"/><path d="M36.8 106.8H40V110.6H43.8V113.8H40V117.6H36.8V113.8H33V110.6H36.8Z" fill="#5d91cb" stroke="#4b79ad" stroke-width="0.5"/><path d="M57.699999999999996 126.0L64.8 118.9" stroke="#1f1f1f" stroke-width="3.6"/><path d="M58.199999999999996 125.5L64.1 119.60000000000001" stroke="#f3c92a" stroke-width="2.2"/><circle cx="65.39999999999999" cy="118.3" r="1.7" fill="#111"/><circle cx="71.3" cy="112.2" r="8.2" fill="#ececec" stroke="#6f6f6f" stroke-width="1.1"/><rect x="66" y="110.6" width="10.6" height="3.3" rx="1.6" fill="#5d91cb" stroke="#4b79ad" stroke-width="0.5"/><rect x="92.5" y="105.5" width="11" height="13" fill="#eaeaea" stroke="#8c8c8c"/><path d="M91.10000000000001 126.0L98.2 118.9" stroke="#1f1f1f" stroke-width="3.6"/><path d="M91.60000000000001 125.5L97.5 119.60000000000001" stroke="#f3c92a" stroke-width="2.2"/><circle cx="98.8" cy="118.3" r="1.7" fill="#111"/><circle cx="104.7" cy="112.2" r="8.2" fill="#ececec" stroke="#6f6f6f" stroke-width="1.1"/><text x="104.9" y="116.2" text-anchor="middle" font-size="10.5" font-weight="bold" fill="#27313b" font-family="Liberation Sans" letter-spacing="-0.5">1:1</text><g fill="#5b8ac4" stroke="#3a68a3" stroke-width="0.7"><path d="M123.8 103H132L129.3 105.7L132.3 108.7L129 112L126 109L123.8 111.3Z"/><path d="M147.2 103H139L141.7 105.7L138.7 108.7L142 112L145 109L147.2 111.3Z"/><path d="M147.2 126H139L141.7 123.3L138.7 120.3L142 117L145 120L147.2 117.7Z"/></g><path d="M123.5 126L130 119.5" stroke="#333" stroke-width="3.4"/><path d="M123.8 125.7L129.5 120" stroke="#f3c92a" stroke-width="2.3"/><circle cx="136.2" cy="114.5" r="7.4" fill="#ececec" stroke="#7c7c7c" stroke-width="1"/><g transform="translate(158,104)"><path d="M2 9C2 4 6 1 10.5 1C13.5 1 16 2.5 17.5 4.5L20 2V10H12L15 7.5C14 6 12.5 5 10.5 5C8 5 6 7 6 9.5Z" fill="#5a9ad8" stroke="#3f7fc0" stroke-width="0.6"/><path d="M19 12.5C19 17.5 15 20.5 10.5 20.5C7.5 20.5 5 19 3.5 17L1 19.5V11.5H9L6 14C7 15.5 8.5 16.5 10.5 16.5C13 16.5 15 14.5 15 12Z" fill="#5a9ad8" stroke="#3f7fc0" stroke-width="0.6"/></g><rect x="193.5" y="107.0" width="1" height="1" fill="#b5b7b9"/><rect x="193.5" y="110.6" width="1" height="1" fill="#b5b7b9"/><rect x="193.5" y="114.2" width="1" height="1" fill="#b5b7b9"/><rect x="193.5" y="117.8" width="1" height="1" fill="#b5b7b9"/><rect x="193.5" y="121.4" width="1" height="1" fill="#b5b7b9"/><rect x="196.5" y="107.0" width="1" height="1" fill="#b5b7b9"/><rect x="196.5" y="110.6" width="1" height="1" fill="#b5b7b9"/><rect x="196.5" y="114.2" width="1" height="1" fill="#b5b7b9"/><rect x="196.5" y="117.8" width="1" height="1" fill="#b5b7b9"/><rect x="196.5" y="121.4" width="1" height="1" fill="#b5b7b9"/><g transform="translate(207,106)"><rect x="0.5" y="0.5" width="13" height="11" fill="#c5e0f6" stroke="#4f6f8c"/><path d="M9 10.5V6C9 3 11 1 13.5 1C16 1 18 3 18 6V10.5" fill="none" stroke="#9a9a9a" stroke-width="2"/><rect x="6.5" y="10.5" width="14" height="8.5" rx="1.2" fill="#f0d41e" stroke="#c9a80c"/></g><g transform="translate(240,106)"><rect x="0.5" y="0.5" width="13" height="11" fill="#c5e0f6" stroke="#4f6f8c"/><circle cx="14" cy="5.8" r="5.6" fill="#c5e0f6" stroke="#6a8aa8" stroke-width="0.8"/><path d="M10.5 10.5V7C10.5 4.5 12 3.2 14 3.2C16 3.2 17.3 4.5 17.5 6.5" fill="none" stroke="#9a9a9a" stroke-width="2"/><rect x="6.5" y="10.5" width="14" height="8.5" rx="1.2" fill="#f0d41e" stroke="#c9a80c"/></g><rect x="275.5" y="113.5" width="12" height="9.5" rx="1" fill="#c8e3f7" stroke="#5a7d9c"/><circle cx="285.5" cy="112" r="6.2" fill="#c8e3f7" stroke="#5a7d9c"/><rect x="272.8" y="104.8" width="2.4" height="2.4" fill="#000"/><rect x="290.8" y="104.8" width="2.4" height="2.4" fill="#000"/><rect x="272.8" y="122.8" width="2.4" height="2.4" fill="#000"/><rect x="290.8" y="122.8" width="2.4" height="2.4" fill="#000"/><rect x="308.5" y="113.5" width="12" height="9.5" rx="1" fill="#f3ef9c" stroke="#8a8a6a"/><circle cx="318.5" cy="112" r="6.2" fill="#c8e3f7" stroke="#5a7d9c"/><rect x="310.8" y="104.8" width="2.4" height="2.4" fill="#000"/><rect x="323.8" y="104.8" width="2.4" height="2.4" fill="#000"/><rect x="305.8" y="110.8" width="2.4" height="2.4" fill="#000"/><rect x="310.8" y="117.8" width="2.4" height="2.4" fill="#000"/><rect x="323.8" y="117.8" width="2.4" height="2.4" fill="#000"/><rect x="305.8" y="122.8" width="2.4" height="2.4" fill="#000"/><rect x="320.8" y="122.8" width="2.4" height="2.4" fill="#000"/><rect x="339.5" y="113.5" width="15" height="11" fill="#c8e3f7" stroke="#7a9cba"/><rect x="343.5" y="105.5" width="15" height="11" fill="#f3ef9c" stroke="#8e8e8e"/><path d="M357 124.5H363L360 127.1Z" fill="#6d6e70"/><rect x="372" y="104" width="1.3" height="22" fill="#2b2b2b"/><rect x="373.5" y="105.5" width="9" height="8" fill="#c8f5c0" stroke="#7aa874"/><rect x="373.5" y="115.5" width="13" height="9" fill="#c8e3f7" stroke="#7a9cba"/><path d="M390 124.5H396L393 127.1Z" fill="#6d6e70"/><rect x="404.5" y="110.5" width="4" height="10" fill="#c8f5c0" stroke="#7aa874"/><rect x="413.5" y="110.5" width="6" height="14" fill="#c8e3f7" stroke="#7a9cba"/><rect x="422.5" y="110.5" width="4" height="8" fill="#c8f5c0" stroke="#7aa874"/><path d="M404.3 105V113M413.3 105V113M422.3 105V113" stroke="#2b2b2b" stroke-width="1.1"/><path d="M423 124.5H429L426 127.1Z" fill="#6d6e70"/><rect x="438.5" y="105.5" width="11" height="19" fill="#c8e3f7" stroke="#6f94b5"/><rect x="452.5" y="105.5" width="5" height="19" fill="#f3ef9c" stroke="#8e8e8e"/><path d="M439 115H442.5M441 113L443 115L441 117M449 115H445.5M447 113L445 115L447 117" stroke="#555" stroke-width="0.9" fill="none"/><path d="M456.5 124.5H462.5L459.5 127.1Z" fill="#6d6e70"/><path d="M25 173.3L19.8 164.5Q18.2 161.5 18.7 159.6Q19.8 157.6 21.8 159.3L23.8 161.8V153.4Q23.8 151.3 25.3 151.3Q26.8 151.3 26.9 153.2V159V154.5Q27 152.6 28.7 152.6Q30.4 152.6 30.5 154.5V159.5V156.8Q30.7 154.9 32.4 154.9Q34 154.9 34.2 156.9V160.5V159.3Q34.5 157.8 35.4 157.9Q36.5 158.2 36.4 160.5V166Q36.2 169.8 34.2 173.3Z" fill="#fff" stroke="#151515" stroke-width="1.15" stroke-linejoin="round"/><rect x="16.4" y="184.5" width="9" height="13" fill="none" stroke="#111" stroke-width="1.2" stroke-dasharray="1.5 2.3"/><path d="M15.8 206.2L23 199" stroke="#1f1f1f" stroke-width="3.7"/><path d="M16.3 205.7L22.3 199.7" stroke="#f1c628" stroke-width="2.2"/><circle cx="23.6" cy="198.6" r="1.7" fill="#111"/><circle cx="30.2" cy="191.6" r="8.5" fill="#ebebeb" stroke="#7e7e7e" stroke-width="1.1"/><rect x="33.6" y="188.5" width="1.4" height="1.4" fill="#c9c9c9"/><rect x="33.6" y="192.5" width="1.4" height="1.4" fill="#c9c9c9"/><rect x="11.5" y="212.5" width="31" height="30" rx="3" fill="#dcdde0" stroke="#b5b7ba"/><path d="M23 217.8H30.5M17.8 224V229M34.8 224V229" stroke="#3a3a3a" stroke-width="0.9" stroke-dasharray="0.9 2.1"/><rect x="17.4" y="217.2" width="3.2" height="3.2" fill="#fafafa" stroke="#4a4a4a" stroke-width="0.8"/><rect x="31.7" y="217.2" width="3.2" height="3.2" fill="#fafafa" stroke="#4a4a4a" stroke-width="0.8"/><rect x="17.4" y="231" width="3.2" height="3.2" fill="#fafafa" stroke="#4a4a4a" stroke-width="0.8"/><rect x="31.7" y="231" width="3.2" height="3.2" fill="#fafafa" stroke="#4a4a4a" stroke-width="0.8"/><path d="M20.3 217.5L22.5 234.6L26 231.4L30.3 238.9L33.3 237.3L29.1 230L34.8 229.6Z" fill="#fff" stroke="#0d0d0d" stroke-width="1.05" stroke-linejoin="miter"/><rect x="17.5" y="248.5" width="19.5" height="20.5" rx="1" fill="#e4e4e4" stroke="#a0a0a0"/><g fill="#dadada"><rect x="22" y="249" width="3" height="3"/><rect x="28" y="249" width="3" height="3"/><rect x="34" y="249" width="3" height="3"/><rect x="25" y="252" width="3" height="3"/><rect x="31" y="252" width="3" height="3"/><rect x="22" y="255" width="3" height="3"/><rect x="28" y="255" width="3" height="3"/><rect x="34" y="255" width="3" height="3"/><rect x="25" y="258" width="3" height="3"/><rect x="31" y="258" width="3" height="3"/><rect x="22" y="261" width="3" height="3"/><rect x="28" y="261" width="3" height="3"/><rect x="34" y="261" width="3" height="3"/><rect x="25" y="264" width="3" height="3"/><rect x="31" y="264" width="3" height="3"/></g><path d="M17.5 266V250.5Q17.5 248 19.3 248Q21 248 21 250.5V266Z" fill="#ededed" stroke="#a0a0a0" stroke-width="0.9"/><path d="M17.5 266Q17.5 269 20.5 269H22" fill="#cfcfcf" stroke="#a0a0a0" stroke-width="0.9"/><g fill="#6b9bd3" stroke="#4f7fb5" stroke-width="0.6"><path d="M29.9 250.9L34.8 255.6H31.4V258.2H28.4V255.6H25Z"/><path d="M21.9 262.1L26.7 258.2V266Z"/><rect x="28.4" y="265.6" width="3" height="3.2"/><rect x="33.1" y="260.4" width="3" height="3"/></g><path d="M23.5 281.5L35.5 287.5M23.5 281.5L18.5 299" stroke="#111" stroke-width="1"/><path d="M20 298L24 295" stroke="#111" stroke-width="0.9" stroke-dasharray="1 1.3"/><path d="M28.8 292.8L36.5 300.5" stroke="#d29a1e" stroke-width="3"/><path d="M25.2 300.3L31 294.5" stroke="#eccb1c" stroke-width="2.7"/><path d="M24.8 293.5L31.5 287.5" stroke="#a8a8a8" stroke-width="3.6"/><path d="M25.2 293L31 288" stroke="#e2e2e2" stroke-width="1.6"/><path d="M24.6 290.6L27 288.6" stroke="#d79a3c" stroke-width="1.6"/><circle cx="23.5" cy="281.5" r="2.7" fill="#2a7df0"/><circle cx="35.5" cy="287.5" r="2.7" fill="#2a7df0"/><circle cx="18.5" cy="299" r="2.7" fill="#2a7df0"/><g transform="translate(17,312)"><rect x="0.5" y="0.5" width="19.5" height="20.5" rx="1" fill="url(#sg)" stroke="#a0a0a0"/><path d="M0.5 18V2.5Q0.5 0 2.3 0Q4 0 4 2.5V16.5H3Q0.5 16.5 0.5 18Z" fill="#f2f2f2" stroke="#a0a0a0" stroke-width="0.9"/></g><g transform="translate(30,326)"><rect x="0" y="0" width="9.5" height="9.5" rx="2" fill="#4f914f" stroke="#3b733b" stroke-width="0.7"/><path d="M4.75 1.6V7.9M1.6 4.75H7.9" stroke="#fff" stroke-width="2.1"/></g><path d="M16.5 359L22 348H36.5V362L30.5 361Z" fill="#dedede" stroke="#9c9c9c" stroke-width="0.8"/><path d="M20 354L36 352M18 357L33 356M24 348L22 360M30 348L28 361M35 348L33 357" stroke="#a8a8a8" stroke-width="0.5"/><g transform="translate(30,358)"><rect x="0" y="0" width="9.5" height="9.5" rx="2" fill="#4f914f" stroke="#3b733b" stroke-width="0.7"/><path d="M4.75 1.6V7.9M1.6 4.75H7.9" stroke="#fff" stroke-width="2.1"/></g><rect x="17.5" y="380.5" width="19.5" height="13" fill="#2f9be9" stroke="#777"/><path d="M18 393V387L24 384L36.5 389V393Z" fill="#d1b04f"/><path d="M18 393V390L36.5 391V393Z" fill="#a4822e"/><g transform="translate(30,390)"><rect x="0" y="0" width="9.5" height="9.5" rx="2" fill="#4f914f" stroke="#3b733b" stroke-width="0.7"/><path d="M4.75 1.6V7.9M1.6 4.75H7.9" stroke="#fff" stroke-width="2.1"/></g><rect x="17.5" y="412.5" width="19.5" height="13" fill="#f0f0f0" stroke="#8c8c8c"/><path d="M23 416.5V415H31V416.5M27 415V422.5M25.5 422.5H28.5" stroke="#222" stroke-width="1.1" fill="none"/><g transform="translate(30,422)"><rect x="0" y="0" width="9.5" height="9.5" rx="2" fill="#4f914f" stroke="#3b733b" stroke-width="0.7"/><path d="M4.75 1.6V7.9M1.6 4.75H7.9" stroke="#fff" stroke-width="2.1"/></g><rect x="18.2" y="442.2" width="4.6" height="4.6" fill="#fdc000" stroke="#e08a00" stroke-width="0.7"/><rect x="18.2" y="448.5" width="4.6" height="4.6" fill="#e8470a" stroke="#b53303" stroke-width="0.7"/><rect x="18.2" y="454.7" width="4.6" height="4.6" fill="#12a04a" stroke="#075c27" stroke-width="0.7"/><path d="M24.5 445.5H30M24.5 452H33M24.5 458H28" stroke="#8c8c8c" stroke-width="1.4"/><g transform="translate(30,454)"><rect x="0" y="0" width="9.5" height="9.5" rx="2" fill="#4f914f" stroke="#3b733b" stroke-width="0.7"/><path d="M4.75 1.6V7.9M1.6 4.75H7.9" stroke="#fff" stroke-width="2.1"/></g><rect x="16.5" y="480" width="21" height="3.6" rx="1" fill="#555"/><path d="M19.5 481.8H24M27.5 481.8H32" stroke="#fff" stroke-width="1.5"/><g transform="translate(30,486)"><rect x="0" y="0" width="9.5" height="9.5" rx="2" fill="#4f914f" stroke="#3b733b" stroke-width="0.7"/><path d="M4.75 1.6V7.9M1.6 4.75H7.9" stroke="#fff" stroke-width="2.1"/></g><path d="M26.8 505L19.2 524.5L26 520.5L31.5 519Z" fill="#5b87c5" stroke="#3a68a8" stroke-width="0.6"/><path d="M25 516V511L28 516V511" stroke="#fff" stroke-width="0.9" fill="none"/><g transform="translate(29.5,517)"><rect x="0" y="0" width="9.5" height="9.5" rx="2" fill="#4f914f" stroke="#3b733b" stroke-width="0.7"/><path d="M4.75 1.6V7.9M1.6 4.75H7.9" stroke="#fff" stroke-width="2.1"/></g><rect x="17.5" y="545.5" width="13" height="10" fill="#c8e3f7" stroke="#6f94b5"/><circle cx="30.8" cy="547" r="5.8" fill="#f7b1b1" stroke="#d9827f" stroke-width="0.7"/><path d="M25.5 536L32 548H19Z" fill="#b8f0a6" stroke="#5fa85a" stroke-width="0.7"/><g transform="translate(30,549.5)"><rect x="0" y="0" width="9.5" height="9.5" rx="2" fill="#4f914f" stroke="#3b733b" stroke-width="0.7"/><path d="M4.75 1.6V7.9M1.6 4.75H7.9" stroke="#fff" stroke-width="2.1"/></g><path d="M37 557H40L38.5 558.5Z" fill="#333"/><path d="M27 569.5L29.6 576.3L36.8 576.6L31.2 581L33.2 588L27 584L20.8 588L22.8 581L17.2 576.6L24.4 576.3Z" fill="#f8e09a" stroke="#e0a060" stroke-width="0.9"/><g transform="translate(30,582)"><rect x="0" y="0" width="9.5" height="9.5" rx="2" fill="#4f914f" stroke="#3b733b" stroke-width="0.7"/><path d="M4.75 1.6V7.9M1.6 4.75H7.9" stroke="#fff" stroke-width="2.1"/></g><path d="M18.5 619.5L34 604" stroke="#555" stroke-width="1"/><path d="M37 601L30 603L35 608Z" fill="#fff" stroke="#222" stroke-width="1.1"/><rect x="17" y="618" width="3" height="3" fill="#222"/><g transform="translate(30,614)"><rect x="0" y="0" width="9.5" height="9.5" rx="2" fill="#4f914f" stroke="#3b733b" stroke-width="0.7"/><path d="M4.75 1.6V7.9M1.6 4.75H7.9" stroke="#fff" stroke-width="2.1"/></g><path d="M23.5 633.7L35.5 640M23.5 633.7L18.5 651" stroke="#111" stroke-width="1.2"/><path d="M19 650.5L35 640.5" stroke="#111" stroke-width="1" stroke-dasharray="1.2 1.2"/><circle cx="23.5" cy="633.7" r="2.6" fill="#2a7df0"/><circle cx="35.5" cy="640" r="2.6" fill="#2a7df0"/><circle cx="18.5" cy="651" r="2.6" fill="#2a7df0"/><g transform="translate(30,646)"><rect x="0" y="0" width="9.5" height="9.5" rx="2" fill="#4f914f" stroke="#3b733b" stroke-width="0.7"/><path d="M4.75 1.6V7.9M1.6 4.75H7.9" stroke="#fff" stroke-width="2.1"/></g><path d="M37 654H40L38.5 655.5Z" fill="#333"/><path d="M24.3 684L27 686.5L29.7 684M24.3 688.5L27 691L29.7 688.5" stroke="#31363b" stroke-width="1" fill="none"/></svg><svg width="1075" height="742" style="left:0;top:0;position:absolute"><path d="M26.5 24.5A7.9 7.9 0 1 1 27.5 23.2" fill="none" stroke="#8fba24" stroke-width="3.3"/><path d="M22 20.5L28 26.5" stroke="#62a03a" stroke-width="3.3" stroke-linecap="round"/><path d="M19.3 17.3L21.3 19.3" stroke="#f48a1a" stroke-width="3.4" stroke-linecap="round"/><path d="M21.4 19.4L22.6 20.6" stroke="#e9e24c" stroke-width="3.3"/><path d="M1003 17L1008.5 22.5L1014 17" stroke="#fcfcfc" stroke-width="1.1" fill="none"/><path d="M1026.5 21.5L1032 16L1037.5 21.5" stroke="#fcfcfc" stroke-width="1.1" fill="none"/><path d="M1051.5 14.5L1060.5 23.5M1060.5 14.5L1051.5 23.5" stroke="#fcfcfc" stroke-width="1.1" fill="none"/></svg>
</div></body></html>
